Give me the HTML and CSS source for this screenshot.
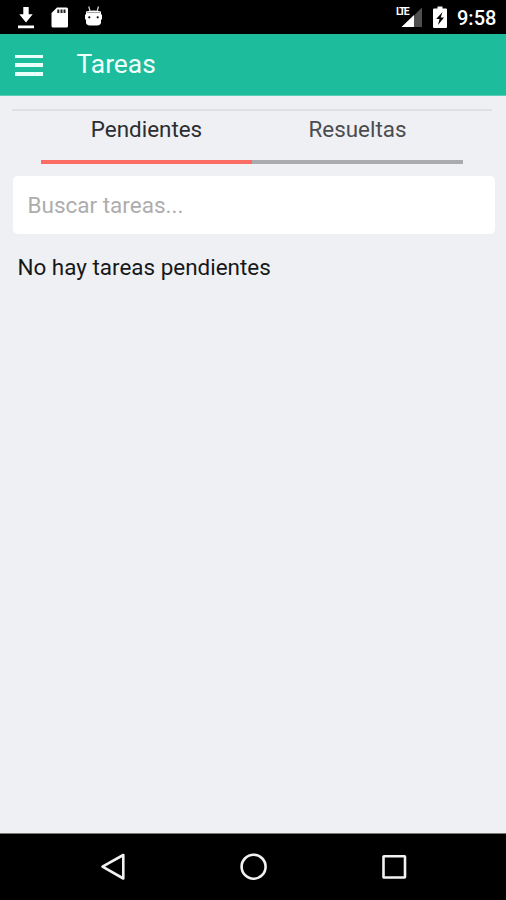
FILE: index.html
```html
<!DOCTYPE html>
<html lang="es">
<head>
  <meta charset="UTF-8" />
  <meta name="viewport" content="width=device-width, initial-scale=1.0"/>
  <title>Tareas</title>
  <link rel="stylesheet" href="styles.css">
</head>
<body>
  <div class="status-bar">
    <svg class="status-left" width="110" height="34" viewBox="0 0 110 34">
      <!-- download -->
      <path fill="#fff" d="M23.3 7h5.400v7.300h4L26 22.500l-6.700-8.200h4zM18 25.400h16v2.800H18z"/>
      <!-- sd card -->
      <path fill="#fff" d="M57 7.500h9.500q1.500 0 1.500 1.500v17q0 1.500-1.500 1.500h-13.500q-1.500 0-1.500-1.500V13z"/>
      <path fill="#222" d="M57.300 9.500h2v3.500h-2zM60.500 9.500h2v3.500h-2zM63.500 9.500h2v3.500h-2z"/>
      <!-- android head -->
      <path fill="none" stroke="#ddd" stroke-width="1.200" d="M88.700 6.500l1.300 4.500M98.500 6.500l-1.300 4.500"/>
      <path fill="#fff" d="M86 11.500q7.500-2 15 0v3h1v5h-1v3q0 2.500-4 3h-7q-4-.5-4-3v-3h-1v-5h1z"/>
      <path fill="none" stroke="#888" stroke-width=".8" d="M87 12.500h13"/>
      <circle cx="89.300" cy="17.300" r="1.100"/>
      <circle cx="97.700" cy="17.300" r="1.100"/>
    </svg>
    <div class="status-right">
      <span class="lte">LTE</span>
      <svg width="58" height="34" viewBox="0 0 58 34">
        <!-- signal -->
        <path fill="#505050" d="M22 7.500v19.500h-8V15.500z"/>
        <path fill="#fff" d="M14 15v12H1.500z"/>
        <!-- battery -->
        <path fill="#fff" d="M37.500 6.500h5v2H46q1 0 1 1V27q0 1-1 1H34q-1 0-1-1V9.500q0-1 1-1h3.500z"/>
        <path d="M42.500 12l-6.300 7h3.300l-1.500 6 6-7.500h-3.300z"/>
      </svg>
      <span class="clock">9:58</span>
    </div>
  </div>

  <header class="header">
    <button class="menu-btn" aria-label="Menú"><span></span><span></span><span></span></button>
    <h1>Tareas</h1>
  </header>

  <main class="content">
    <div class="tabs">
      <button class="tab selected">Pendientes</button>
      <button class="tab">Resueltas</button>
    </div>
    <input class="search" type="text" placeholder="Buscar tareas..."/>
    <p class="empty">No hay tareas pendientes</p>
  </main>

  <nav class="nav-bar">
    <svg width="28" height="30" viewBox="0 0 28 30"><path d="M24.300 3v23.500L3.500 14.700z"/></svg>
    <svg width="28" height="30" viewBox="0 0 28 30"><circle cx="13.600" cy="14.700" r="12"/></svg>
    <svg width="28" height="30" viewBox="0 0 28 30"><rect x="3.500" y="4.200" width="21.500" height="21.300" rx=".5"/></svg>
  </nav>
</body>
</html>
```
FILE: styles.css
```css
* {
  box-sizing: border-box;
}

body {
  font-family: Roboto, sans-serif;
  margin: 0;
  height: 900px;
  background: #eff0f4;
  display: flex;
  flex-direction: column;
  overflow: hidden;
}

button {
  font-family: inherit;
  background: none;
  border: none;
  padding: 0;
}

.status-bar {
  height: 34px;
  background: #000;
  color: #fff;
  display: flex;
  justify-content: space-between;
  padding-right: 11px;
}

.status-right {
  display: flex;
}

.lte {
  width: 4px;
  padding-top: 6px;
  font-size: 10.5px;
  line-height: 12px;
  font-weight: bold;
  letter-spacing: -1.6px;
}

.clock {
  width: 38px;
  margin-left: -1px;
  font-size: 20px;
  line-height: 36px;
  font-weight: 500;
  text-align: right;
  white-space: nowrap;
}

.header {
  height: 62px;
  padding-left: 14.5px;
  background: #1dbc9c;
  border-bottom: 1px solid #5cccb6;
  display: flex;
  align-items: center;
}

.menu-btn {
  width: 28px;
  height: 21px;
  margin-top: 1px;
  display: flex;
  flex-direction: column;
  justify-content: space-between;
}

.menu-btn span {
  width: 100%;
  height: 3.5px;
  background: #e9fffa;
}

.header h1 {
  margin: 0 0 1px 34px;
  font-size: 26.4px;
  font-weight: 400;
  color: #effffb;
}

.content {
  flex: 1;
  padding: 13px 14px 0 12px;
}

.tabs {
  display: flex;
  padding: 0 29px;
  border-top: 2px solid #dfe0e3;
}

.tab {
  flex: 1;
  height: 53px;
  padding-bottom: 13px;
  border-bottom: 4px solid #aaabac;
  font-size: 22.4px;
  color: #4b4c50;
}

.tab.selected {
  border-color: #fb6d64;
  color: #2c2d30;
}

.search {
  display: block;
  width: 482px;
  height: 58px;
  margin: 12px 0 0 .5px;
  padding: 0 15px 1px;
  border: none;
  border-radius: 5px;
  background: #fff;
  font-family: inherit;
  font-size: 22.5px;
}

.search::placeholder {
  color: #adadad;
}

.empty {
  margin: 20px 5.5px 0;
  font-size: 22.45px;
  line-height: 26px;
  color: #17181a;
}

.nav-bar {
  height: 67px;
  padding: 0 98px 0 99px;
  background: #000;
  border-top: 1px solid #777;
  display: flex;
  align-items: center;
  justify-content: space-between;
}

.nav-bar svg {
  fill: none;
  stroke: #f2f2f2;
  stroke-width: 2.6;
  stroke-linejoin: round;
}
```
